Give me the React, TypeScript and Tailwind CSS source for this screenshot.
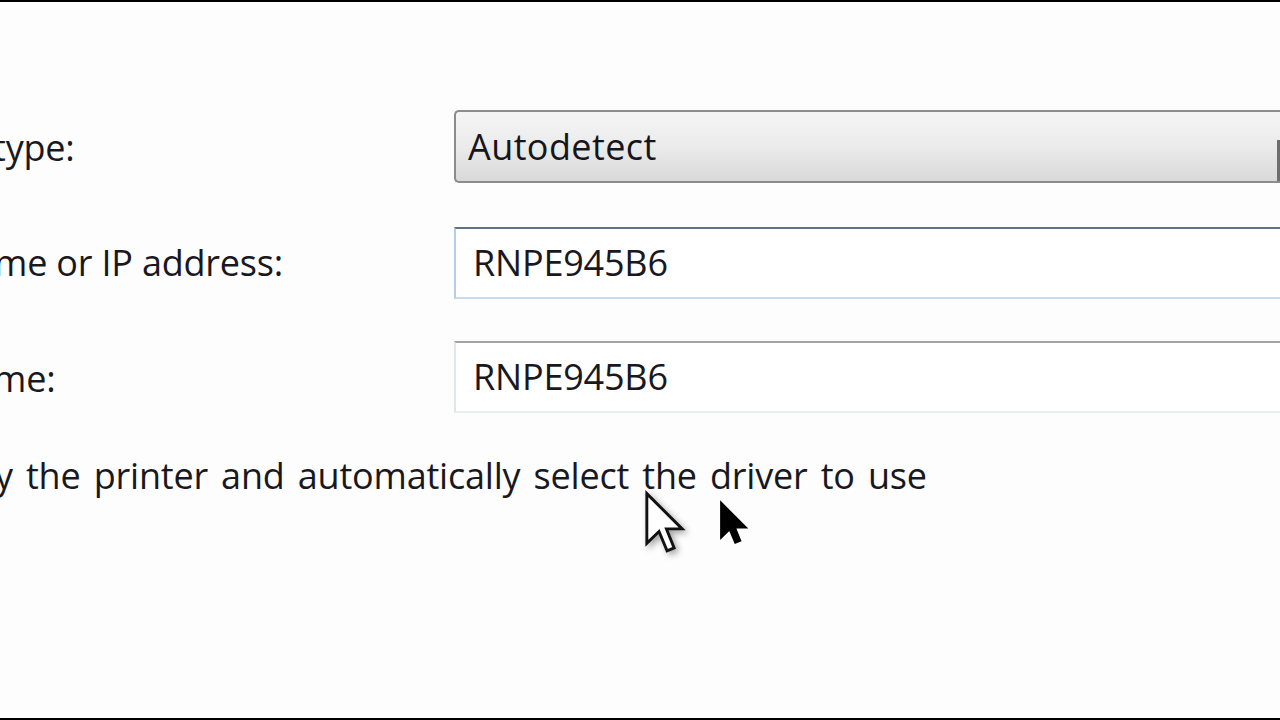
import React from "react";

const font = { fontFamily: '"Open Sans", "Noto Sans", sans-serif' };

function Arrow({ fill, stroke }: { fill: string; stroke: string }) {
  return (
    <svg viewBox="0 0 12 19" className="w-full h-full overflow-visible">
      <path
        d="M0.5 0.5 L0.5 16 L4.3 12.3 L6.8 18.3 L9 17.4 L6.6 11.5 L11.5 11.5 Z"
        fill={fill}
        stroke={stroke}
        strokeWidth="0.9"
        strokeLinejoin="miter"
      />
    </svg>
  );
}

export default function App() {
  return (
    <div
      className="relative w-[1280px] h-[720px] overflow-hidden bg-[#fdfdfd] border-t-2 border-b-2 border-black text-[#18181e] text-[36px] tracking-[-0.2px]"
      style={font}
    >
      <div className="flex flex-col pt-[108px]">
        <div className="flex items-center h-[73px]">
          <div className="w-[454px] shrink-0 overflow-hidden">
            <span className="block ml-[-7px] mt-[2px]">type:</span>
          </div>
          <div className="relative flex-1 h-[73px] rounded-l-[5px] border-2 border-r-0 border-[#8c8c8c] bg-gradient-to-b from-[#f5f5f5] via-[#ebebeb] to-[#d9d9d9] flex items-center pl-[12px]">
            <span className="text-[#15151a] mt-[1px] tracking-[0.4px]">Autodetect</span>
            <div className="absolute right-0 top-[28px] bottom-0 w-[3px] bg-[#6e6e6e]" />
          </div>
        </div>
        <div className="flex items-center h-[72px] mt-[44px]">
          <div className="w-[454px] shrink-0 overflow-hidden">
            <span className="block ml-[-6px]">me or IP address:</span>
          </div>
          <div className="flex-1 h-[72px] border-2 border-r-0 border-t-[#5d7388] border-l-[#b7cde3] border-b-[#c9dcee] bg-white flex items-center pl-[17px]">
            <span>RNPE945B6</span>
          </div>
        </div>
        <div className="flex items-center h-[72px] mt-[42px]">
          <div className="w-[454px] shrink-0 overflow-hidden">
            <span className="block ml-[-7px] mt-[4px]">me:</span>
          </div>
          <div className="flex-1 h-[72px] border-2 border-r-0 border-t-[#a3a3a3] border-l-[#e0e6ec] border-b-[#e8edf2] bg-white flex items-center pl-[17px]">
            <span>RNPE945B6</span>
          </div>
        </div>
        <div className="mt-[36px] overflow-hidden">
          <span className="block ml-[-5px] [word-spacing:4px]">y the printer and automatically select the driver to use</span>
        </div>
      </div>

      <div className="absolute left-[645px] top-[490px] w-[39px] h-[61px] drop-shadow-[3px_3px_3px_rgba(0,0,0,0.35)]">
        <Arrow fill="#ffffff" stroke="#111111" />
      </div>
      <div className="absolute left-[720px] top-[498px] w-[27px] h-[46px]">
        <Arrow fill="#000000" stroke="#000000" />
      </div>
    </div>
  );
}
